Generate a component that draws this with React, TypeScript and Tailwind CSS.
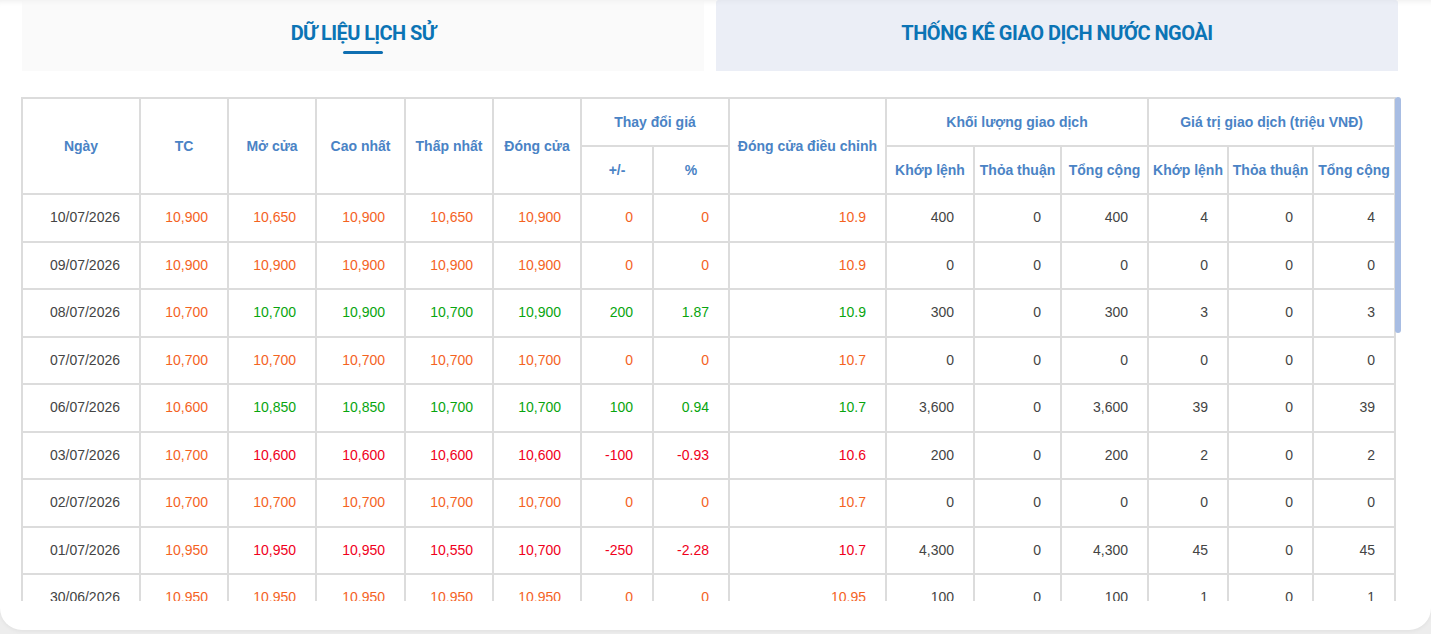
import React from "react";

type C = "o" | "g" | "r";
type Row = {
  d: string;
  tc: string;
  p: [string, C][]; // open, high, low, close, chg, pct, adj
  kl: [string, string, string];
  gt: [string, string, string];
};

const colorOf: Record<C, string> = {
  o: "text-[#f4631f]",
  g: "text-[#08a50f]",
  r: "text-[#f0001c]",
};

const same = (v: string, n: number): [string, C][] => Array.from({ length: n }, () => [v, "o"] as [string, C]);

const rows: Row[] = [
  { d: "10/07/2026", tc: "10,900", p: [["10,650", "o"], ["10,900", "o"], ["10,650", "o"], ["10,900", "o"], ["0", "o"], ["0", "o"], ["10.9", "o"]], kl: ["400", "0", "400"], gt: ["4", "0", "4"] },
  { d: "09/07/2026", tc: "10,900", p: [...same("10,900", 4), ["0", "o"], ["0", "o"], ["10.9", "o"]], kl: ["0", "0", "0"], gt: ["0", "0", "0"] },
  { d: "08/07/2026", tc: "10,700", p: [["10,700", "g"], ["10,900", "g"], ["10,700", "g"], ["10,900", "g"], ["200", "g"], ["1.87", "g"], ["10.9", "g"]], kl: ["300", "0", "300"], gt: ["3", "0", "3"] },
  { d: "07/07/2026", tc: "10,700", p: [...same("10,700", 4), ["0", "o"], ["0", "o"], ["10.7", "o"]], kl: ["0", "0", "0"], gt: ["0", "0", "0"] },
  { d: "06/07/2026", tc: "10,600", p: [["10,850", "g"], ["10,850", "g"], ["10,700", "g"], ["10,700", "g"], ["100", "g"], ["0.94", "g"], ["10.7", "g"]], kl: ["3,600", "0", "3,600"], gt: ["39", "0", "39"] },
  { d: "03/07/2026", tc: "10,700", p: [["10,600", "r"], ["10,600", "r"], ["10,600", "r"], ["10,600", "r"], ["-100", "r"], ["-0.93", "r"], ["10.6", "r"]], kl: ["200", "0", "200"], gt: ["2", "0", "2"] },
  { d: "02/07/2026", tc: "10,700", p: [...same("10,700", 4), ["0", "o"], ["0", "o"], ["10.7", "o"]], kl: ["0", "0", "0"], gt: ["0", "0", "0"] },
  { d: "01/07/2026", tc: "10,950", p: [["10,950", "r"], ["10,950", "r"], ["10,550", "r"], ["10,700", "r"], ["-250", "r"], ["-2.28", "r"], ["10.7", "r"]], kl: ["4,300", "0", "4,300"], gt: ["45", "0", "45"] },
  { d: "30/06/2026", tc: "10,950", p: [...same("10,950", 4), ["0", "o"], ["0", "o"], ["10.95", "o"]], kl: ["100", "0", "100"], gt: ["1", "0", "1"] },
  { d: "27/06/2026", tc: "10,950", p: [...same("10,950", 4), ["0", "o"], ["0", "o"], ["10.95", "o"]], kl: ["0", "0", "0"], gt: ["0", "0", "0"] },
  { d: "26/06/2026", tc: "10,800", p: [["10,950", "g"], ["10,950", "g"], ["10,800", "o"], ["10,950", "g"], ["150", "g"], ["1.39", "g"], ["10.95", "g"]], kl: ["1,200", "0", "1,200"], gt: ["13", "0", "13"] },
  { d: "25/06/2026", tc: "10,800", p: [...same("10,800", 4), ["0", "o"], ["0", "o"], ["10.8", "o"]], kl: ["0", "0", "0"], gt: ["0", "0", "0"] },
  { d: "24/06/2026", tc: "10,900", p: [["10,800", "r"], ["10,900", "o"], ["10,800", "r"], ["10,800", "r"], ["-100", "r"], ["-0.92", "r"], ["10.8", "r"]], kl: ["500", "0", "500"], gt: ["5", "0", "5"] },
  { d: "23/06/2026", tc: "10,900", p: [...same("10,900", 4), ["0", "o"], ["0", "o"], ["10.9", "o"]], kl: ["0", "0", "0"], gt: ["0", "0", "0"] },
  { d: "20/06/2026", tc: "10,900", p: [...same("10,900", 4), ["0", "o"], ["0", "o"], ["10.9", "o"]], kl: ["100", "0", "100"], gt: ["1", "0", "1"] },
  { d: "19/06/2026", tc: "10,700", p: [["10,700", "o"], ["10,900", "g"], ["10,700", "o"], ["10,900", "g"], ["200", "g"], ["1.87", "g"], ["10.9", "g"]], kl: ["800", "0", "800"], gt: ["9", "0", "9"] },
  { d: "18/06/2026", tc: "10,700", p: [...same("10,700", 4), ["0", "o"], ["0", "o"], ["10.7", "o"]], kl: ["0", "0", "0"], gt: ["0", "0", "0"] },
  { d: "17/06/2026", tc: "10,700", p: [...same("10,700", 4), ["0", "o"], ["0", "o"], ["10.7", "o"]], kl: ["200", "0", "200"], gt: ["2", "0", "2"] },
  { d: "16/06/2026", tc: "10,800", p: [["10,700", "r"], ["10,800", "o"], ["10,700", "r"], ["10,700", "r"], ["-100", "r"], ["-0.93", "r"], ["10.7", "r"]], kl: ["300", "0", "300"], gt: ["3", "0", "3"] },
  { d: "13/06/2026", tc: "10,800", p: [...same("10,800", 4), ["0", "o"], ["0", "o"], ["10.8", "o"]], kl: ["0", "0", "0"], gt: ["0", "0", "0"] },
  { d: "12/06/2026", tc: "10,800", p: [...same("10,800", 4), ["0", "o"], ["0", "o"], ["10.8", "o"]], kl: ["600", "0", "600"], gt: ["6", "0", "6"] },
];

const widths = [118, 88, 88, 89, 88, 88, 72, 76, 157, 88, 87, 87, 80, 85, 82];

const th = "border-2 border-[#dcdcdc] text-center align-middle font-bold text-[14px] text-[#4a83c5] h-[48px] px-0 whitespace-nowrap";
const td = "border-2 border-[#dcdcdc] text-right align-middle text-[14px] h-[47.5px] pr-[19px] whitespace-nowrap";

export default function App() {
  return (
    <div className="w-[1431px] h-[634px] bg-[#ededed] overflow-hidden" style={{ fontFamily: '"Liberation Sans", Arial, sans-serif' }}>
      <div className="w-[1431px] h-[630px] bg-white rounded-b-[22px] shadow-[0_1px_4px_rgba(0,0,0,0.06),inset_0_7px_7px_-7px_rgba(0,0,0,0.1)] flex flex-col">
        <div className="flex gap-[12px] px-[22px] h-[71px]">
          <div className="w-[682px] h-[71px] bg-[#fafafa] flex flex-col items-center pt-[20px] shadow-[inset_0_6px_6px_-6px_rgba(0,0,0,0.06)]">
            <div className="text-[20px] leading-[26px] font-bold text-[#0b74b5] tracking-[-0.6px]" style={{ fontFamily: 'Roboto, "Noto Sans", sans-serif' }}>
              DỮ LIỆU LỊCH SỬ
            </div>
            <div className="w-[40px] h-[3px] bg-[#0f6fb1] rounded-full mt-[5px]" />
          </div>
          <div className="w-[682px] h-[71px] bg-[#ebeef6] rounded-t-[3px] flex justify-center pt-[20px] shadow-[inset_0_6px_6px_-6px_rgba(0,0,0,0.06)]">
            <div className="text-[20px] leading-[26px] font-bold text-[#0b74b5] tracking-[-0.5px]" style={{ fontFamily: 'Roboto, "Noto Sans", sans-serif' }}>
              THỐNG KÊ GIAO DỊCH NƯỚC NGOÀI
            </div>
          </div>
        </div>
        <div className="relative ml-[21px] mt-[26px] w-[1380px] h-[504px]">
          <div className="w-[1380px] h-[504px] overflow-y-auto [scrollbar-width:none] [&::-webkit-scrollbar]:hidden">
            <table className="table-fixed border-collapse w-[1373px]">
              <colgroup>
                {widths.map((w, i) => (
                  <col key={i} style={{ width: w }} />
                ))}
              </colgroup>
              <thead>
                <tr>
                  <th rowSpan={2} className={th}>Ngày</th>
                  <th rowSpan={2} className={th}>TC</th>
                  <th rowSpan={2} className={th}>Mở cửa</th>
                  <th rowSpan={2} className={th}>Cao nhất</th>
                  <th rowSpan={2} className={th}>Thấp nhất</th>
                  <th rowSpan={2} className={th}>Đóng cửa</th>
                  <th colSpan={2} className={th}>Thay đổi giá</th>
                  <th rowSpan={2} className={th}>Đóng cửa điều chỉnh</th>
                  <th colSpan={3} className={th}>Khối lượng giao dịch</th>
                  <th colSpan={3} className={th}>Giá trị giao dịch (triệu VNĐ)</th>
                </tr>
                <tr>
                  <th className={th}>+/-</th>
                  <th className={th}>%</th>
                  <th className={th}>Khớp lệnh</th>
                  <th className={th}>Thỏa thuận</th>
                  <th className={th}>Tổng cộng</th>
                  <th className={th}>Khớp lệnh</th>
                  <th className={th}>Thỏa thuận</th>
                  <th className={th}>Tổng cộng</th>
                </tr>
              </thead>
              <tbody>
                {rows.map((r) => (
                  <tr key={r.d}>
                    <td className={`${td} text-[#444444]`}>{r.d}</td>
                    <td className={`${td} ${colorOf.o}`}>{r.tc}</td>
                    {r.p.map(([v, c], i) => (
                      <td key={i} className={`${td} ${colorOf[c]}`}>{v}</td>
                    ))}
                    {r.kl.map((v, i) => (
                      <td key={"k" + i} className={`${td} text-[#444444]`}>{v}</td>
                    ))}
                    {r.gt.map((v, i) => (
                      <td key={"g" + i} className={`${td} text-[#444444]`}>{v}</td>
                    ))}
                  </tr>
                ))}
              </tbody>
            </table>
          </div>
          <div className="absolute top-0 left-[1374px] w-[6px] h-[236px] rounded-[3px] bg-[#a8bde3]" />
        </div>
      </div>
    </div>
  );
}
